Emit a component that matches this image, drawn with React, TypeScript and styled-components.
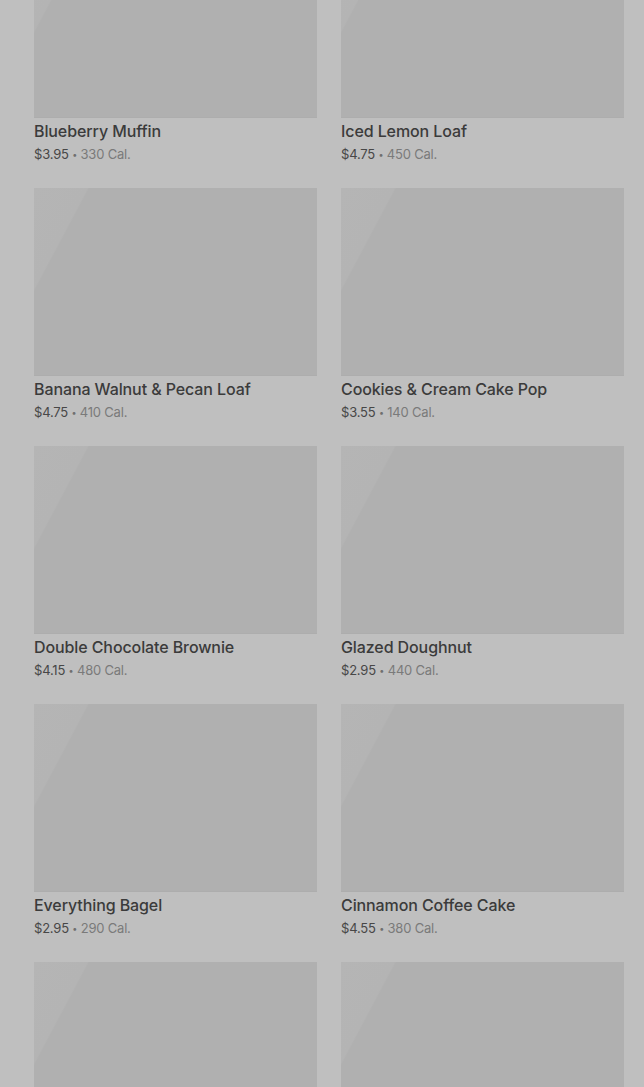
import React from 'react'
import styled, { createGlobalStyle } from 'styled-components'

const items = [
  { name: 'Blueberry Muffin', price: '$3.95', cal: 330 },
  { name: 'Iced Lemon Loaf', price: '$4.75', cal: 450 },
  { name: 'Banana Walnut & Pecan Loaf', price: '$4.75', cal: 410 },
  { name: 'Cookies & Cream Cake Pop', price: '$3.55', cal: 140 },
  { name: 'Double Chocolate Brownie', price: '$4.15', cal: 480 },
  { name: 'Glazed Doughnut', price: '$2.95', cal: 440 },
  { name: 'Everything Bagel', price: '$2.95', cal: 290 },
  { name: 'Cinnamon Coffee Cake', price: '$4.55', cal: 380 },
]

export default function App() {
  return (
    <>
      <GlobalStyle />
      <Page>
        <ProductGrid>
          {items.map(({ name, price, cal }) => (
            <ProductCard key={name}>
              <Thumb />
              <ProductName>{name}</ProductName>
              <ProductMeta>
                <span>{price}</span> <Dot>•</Dot> <Cal>{cal} Cal.</Cal>
              </ProductMeta>
            </ProductCard>
          ))}
          {/* next row, only its pictures are in view */}
          <Thumb />
          <Thumb />
        </ProductGrid>
      </Page>
    </>
  )
}

// styled components
const GlobalStyle = createGlobalStyle`
  html, body {
    margin: 0;
    padding: 0;
    background: #bfbfbf;
    overflow: hidden;
  }
  * { box-sizing: border-box; }
`

const Page = styled.div`
  width: 644px;
  height: 1087px;
  overflow: hidden;
  background: #bfbfbf;
  font-family: Inter, "Noto Sans", sans-serif;
`

const ProductGrid = styled.div`
  display: grid;
  grid-template-columns: 283px 283px;
  column-gap: 24px;
  row-gap: 24px;
  padding: 0 20px 0 34px;
  margin-top: -70px;
`

const ProductCard = styled.div`
  display: flex;
  flex-direction: column;
`

const Thumb = styled.div`
  width: 100%;
  height: 188px;
  background: linear-gradient(118deg, #b5b5b5 0%, #b4b4b4 14%, #b0b0b0 14.5%, #b0b0b0 100%);
  border-bottom: 1px solid #adadad;
`

const ProductName = styled.div`
  margin-top: 2px;
  height: 22px;
  font-size: 16px;
  line-height: 22px;
  font-weight: 500;
  color: #3b3b3b;
  letter-spacing: -0.1px;
  white-space: nowrap;
`

const ProductMeta = styled.div`
  margin-top: 2px;
  height: 20px;
  font-size: 13px;
  line-height: 20px;
  color: #474747;
  letter-spacing: -0.2px;
  white-space: nowrap;
`

const Dot = styled.span`
  font-size: 9px;
  line-height: 1;
  vertical-align: 1px;
  color: #6f6f6f;
`

const Cal = styled.span`
  color: #7a7a7a;
`
